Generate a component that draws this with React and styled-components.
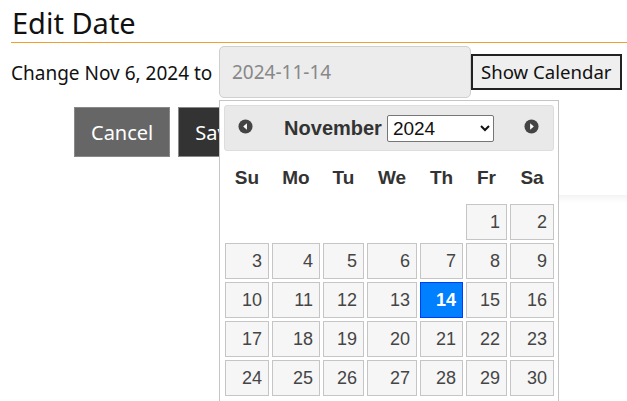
import React from "react";
import styled, { createGlobalStyle } from "styled-components";

const GlobalStyle = createGlobalStyle`
  html, body {
    margin: 0;
    padding: 0;
    background: #fff;
    font-family: "Noto Sans", "Open Sans", sans-serif;
    color: #111;
    overflow: hidden;
  }
`;

const Page = styled.div`
  position: relative;
  width: 627px;
  height: 401px;
  padding-left: 11px;
  box-sizing: border-box;
`;

const Title = styled.h2`
  margin: 0;
  padding-top: 4px;
  height: 38px;
  font-size: 29px;
  font-weight: 400;
  line-height: 38px;
  border-bottom: 1px solid #f0a030;
  padding-left: 1px;
`;

const ChangeRow = styled.div`
  display: flex;
  align-items: center;
  margin-top: 3px;
  height: 52px;
`;

const Label = styled.span`
  font-size: 19px;
  width: 208px;
  margin-top: 1px;
  white-space: nowrap;
`;

const DateInput = styled.input`
  box-sizing: border-box;
  width: 252px;
  height: 52px;
  border: 1px solid #cfcfcf;
  border-radius: 5px;
  background: #ececec;
  padding: 0 12px;
  font-family: inherit;
  font-size: 19px;
  color: #777;
  &::placeholder {
    color: #888;
  }
`;

const ShowButton = styled.button`
  box-sizing: border-box;
  height: 36px;
  margin-top: -1px;
  padding: 0 8px;
  border: 2px solid #222;
  background: #efefef;
  font-family: inherit;
  font-size: 18.6px;
  color: #111;
  white-space: nowrap;
`;

const Actions = styled.div`
  display: flex;
  gap: 8px;
  margin-top: 9px;
  margin-left: 63px;
`;

const ActionButton = styled.button`
  box-sizing: border-box;
  height: 50px;
  padding: 0 16px;
  border: 1px solid #888;
  background: ${(p) => (p.$dark ? "#333" : "#666")};
  color: #fff;
  font-family: inherit;
  font-size: 20px;
`;

const Behind = styled.div`
  position: absolute;
  left: 559px;
  top: 195px;
  width: 68px;
  height: 206px;
  background: linear-gradient(#f3f3f3, #fff 8px);
`;

const Picker = styled.div`
  position: absolute;
  left: 219px;
  top: 100px;
  width: 340px;
  height: 320px;
  box-sizing: border-box;
  border: 1px solid #c5c5c5;
  background: #fff;
  padding: 4px;
  font-family: "Liberation Sans", Arial, sans-serif;
`;

const Header = styled.div`
  display: flex;
  align-items: center;
  height: 46px;
  box-sizing: border-box;
  border: 1px solid #dddddd;
  border-radius: 3px;
  background: #e9e9e9;
  position: relative;
`;

const NavIcon = styled.svg`
  position: absolute;
  top: 13px;
  ${(p) => (p.$next ? "right: 14px;" : "left: 13px;")}
`;

const MonthTitle = styled.div`
  flex: 1;
  display: flex;
  justify-content: center;
  align-items: center;
  gap: 5px;
  font-size: 20px;
  font-weight: 700;
  color: #333;
`;

const YearSelect = styled.select`
  width: 107px;
  height: 27px;
  font-family: "Liberation Sans", Arial, sans-serif;
  font-size: 19px;
  border: 1px solid #767676;
  border-radius: 2px;
  background: #fff;
  color: #111;
  padding: 0 1px;
`;

const Grid = styled.div`
  display: grid;
  grid-template-columns: 44px 48px 41px 50px 43px 41px 44px;
  column-gap: 3px;
  row-gap: 3px;
  margin-left: 1px;
  margin-top: 10px;
`;

const DayName = styled.div`
  height: 40px;
  line-height: 34px;
  text-align: center;
  font-weight: 700;
  font-size: 19px;
  color: #333;
`;

const Cell = styled.div`
  box-sizing: border-box;
  height: 36px;
  line-height: 34px;
  text-align: right;
  padding-right: 6px;
  font-size: 18px;
  border: 1px solid ${(p) => (p.$active ? "#003eff" : "#c5c5c5")};
  background: ${(p) => (p.$active ? "#007fff" : "#f6f6f6")};
  color: ${(p) => (p.$active ? "#fff" : "#454545")};
  font-weight: ${(p) => (p.$active ? 700 : 400)};
`;

const Empty = styled.div`
  height: 36px;
`;

const days = ["Su", "Mo", "Tu", "We", "Th", "Fr", "Sa"];

function Nav({ next }) {
  return (
    <NavIcon $next={next} width="15" height="15" viewBox="0 0 16 16">
      <circle cx="8" cy="8" r="7.5" fill="#444" />
      {next ? (
        <polygon points="6.5,4.5 10.5,8 6.5,11.5" fill="#fff" />
      ) : (
        <polygon points="9.5,4.5 5.5,8 9.5,11.5" fill="#fff" />
      )}
    </NavIcon>
  );
}

export default function App() {
  const cells = [];
  for (let i = 0; i < 5; i++) cells.push(<Empty key={"e" + i} />);
  for (let d = 1; d <= 30; d++) {
    cells.push(
      <Cell key={d} $active={d === 14}>
        {d}
      </Cell>
    );
  }
  return (
    <>
      <GlobalStyle />
      <Page>
        <Title>Edit Date</Title>
        <ChangeRow>
          <Label>Change Nov 6, 2024 to</Label>
          <DateInput placeholder="2024-11-14" />
          <ShowButton>Show Calendar</ShowButton>
        </ChangeRow>
        <Actions>
          <ActionButton>Cancel</ActionButton>
          <ActionButton $dark>Save</ActionButton>
        </Actions>
        <Behind />
        <Picker>
          <Header>
            <Nav />
            <MonthTitle>
              <span>November</span>
              <YearSelect defaultValue="2024">
                <option>2023</option>
                <option>2024</option>
                <option>2025</option>
              </YearSelect>
            </MonthTitle>
            <Nav next />
          </Header>
          <Grid>
            {days.map((d) => (
              <DayName key={d}>{d}</DayName>
            ))}
            {cells}
          </Grid>
        </Picker>
      </Page>
    </>
  );
}
